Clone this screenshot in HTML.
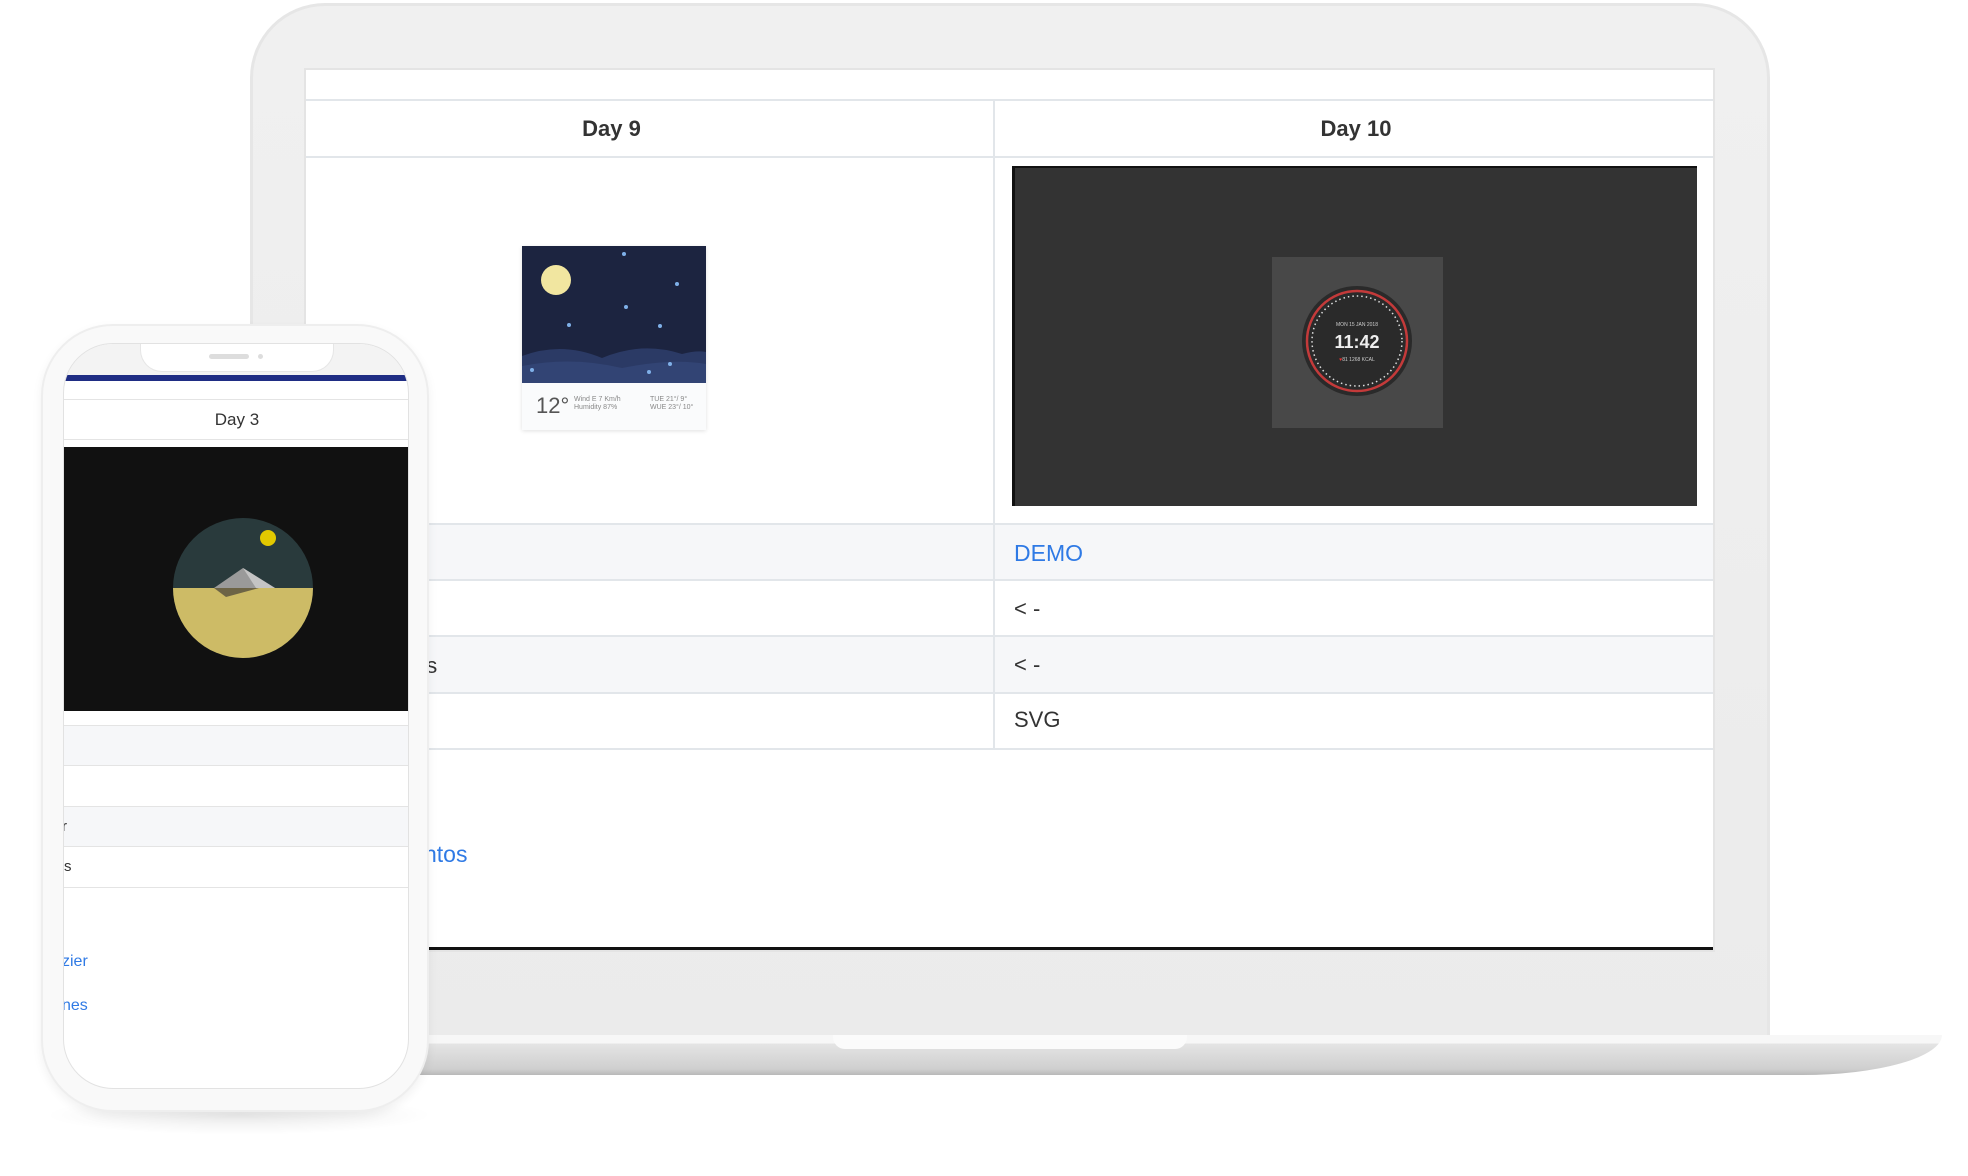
<!DOCTYPE html>
<html><head><meta charset="utf-8"><style>
*{margin:0;padding:0;box-sizing:border-box}
body{width:1968px;height:1176px;background:#fff;position:relative;overflow:hidden;font-family:"Liberation Sans",sans-serif;color:#333}
.a{position:absolute}
.lap{left:250px;top:3px;width:1520px;height:1042px;border-radius:75px 75px 0 0;background:linear-gradient(#f0f0f0,#ebebeb);border:3px solid #e6e6e6;border-bottom:none}
.scr{left:304px;top:68px;width:1411px;height:884px;background:#fff;border:2px solid #e4e4e4;overflow:hidden}
.line{height:2px;background:#e2e6ea}
.base{left:300px;top:1035px;width:1642px;height:40px;background:linear-gradient(#f7f7f7 0,#f7f7f7 8px,#e4e4e4 9px,#cfcfcf 34px,#b8b8b8 40px);border-radius:0 0 140px 0/0 0 40px 0}
</style></head><body>
<div class="a lap"></div>
<div class="a base"></div>
<div class="a" style="left:833px;top:1035px;width:354px;height:14px;background:#fbfbfb;border-radius:0 0 12px 12px"></div>
<div class="a scr">
 <div class="a" style="left:0;top:29px;width:1411px"><div class="line"></div></div>
 <div class="a" style="left:0;top:86px;width:1411px"><div class="line"></div></div>
 <div class="a" style="left:687px;top:30px;width:2px;height:650px;background:#e2e6ea"></div>
 <div class="a" style="left:-38px;top:46px;width:687px;text-align:center;font-size:22px;font-weight:bold;color:#333">Day 9</div>
 <div class="a" style="left:689px;top:46px;width:722px;text-align:center;font-size:22px;font-weight:bold;color:#333">Day 10</div>
 <div class="a" style="left:216px;top:176px;width:184px;height:184px;background:#fafbfc;box-shadow:0 1px 4px rgba(0,0,0,.12)">
  <svg width="184" height="137" style="display:block"><rect width="184" height="137" fill="#1c2440"/>
   <path d="M0 110 Q40 95 80 112 Q120 95 160 108 Q175 104 184 106 V137 H0Z" fill="#2b3a65"/>
   <path d="M0 120 Q50 110 100 122 Q150 112 184 118 V137 H0Z" fill="#324474"/>
   <circle cx="34" cy="34" r="15" fill="#f1e6a0"/>
   <g fill="#7fb0e8"><circle cx="102" cy="8" r="2"/><circle cx="155" cy="38" r="2"/><circle cx="104" cy="61" r="2"/><circle cx="47" cy="79" r="2"/><circle cx="138" cy="80" r="2"/><circle cx="148" cy="118" r="2"/><circle cx="10" cy="124" r="2"/><circle cx="127" cy="126" r="2"/></g></svg>
  <div class="a" style="left:14px;top:147px;font-size:22px;color:#555">12°</div>
  <div class="a" style="left:52px;top:150px;font-size:7px;color:#888;line-height:8px">Wind E 7 Km/h<br>Humidity 87%</div>
  <div class="a" style="left:128px;top:150px;font-size:7px;color:#888;line-height:8px">TUE 21°/ 9°<br>WUE 23°/ 10°</div>
 </div>
 <div class="a" style="left:706px;top:96px;width:685px;height:340px;background:#333;border-left:3px solid #111;border-top:2px solid #111"></div>
 <div class="a" style="left:966px;top:187px;width:171px;height:171px;background:#484848">
  <svg width="171" height="171"><circle cx="85" cy="84" r="55" fill="#2a2a2a"/><circle cx="85" cy="84" r="50" fill="none" stroke="#c43a3a" stroke-width="2.5"/><circle cx="85" cy="84" r="45" fill="none" stroke="#ddd" stroke-width="1.5" stroke-dasharray="1.5 3"/>
  <text x="85" y="69" font-size="5" fill="#ccc" text-anchor="middle" font-family="Liberation Sans">MON 15 JAN 2018</text>
  <text x="85" y="91" font-size="18" font-weight="bold" fill="#eee" text-anchor="middle" font-family="Liberation Sans">11:42</text>
  <text x="85" y="104" font-size="5" fill="#ccc" text-anchor="middle" font-family="Liberation Sans"><tspan fill="#e33">♥</tspan>81    1268 KCAL</text></svg>
 </div>
 <div class="a" style="left:0;top:453px;width:1411px;height:2px;background:#e2e6ea"></div>
 <div class="a" style="left:0;top:455px;width:1411px;height:56px;background:#f6f7f9;border-bottom:2px solid #e2e6ea"></div>
 <div class="a" style="left:0;top:511px;width:1411px;height:56px;border-bottom:2px solid #e2e6ea"></div>
 <div class="a" style="left:0;top:567px;width:1411px;height:57px;background:#f6f7f9;border-bottom:2px solid #e2e6ea"></div>
 <div class="a" style="left:0;top:624px;width:1411px;height:56px;border-bottom:2px solid #e2e6ea"></div>
 <div class="a" style="left:687px;top:455px;width:2px;height:225px;background:#e2e6ea"></div>
 <div class="a" style="left:708px;top:470px;font-size:23px;color:#2f7ae5">DEMO</div>
 <div class="a" style="left:708px;top:526px;font-size:22px;color:#333">&lt; -</div>
 <div class="a" style="left:708px;top:582px;font-size:22px;color:#333">&lt; -</div>
 <div class="a" style="left:708px;top:637px;font-size:22px;color:#333">SVG</div>
 <div class="a" style="left:108px;top:583px;font-size:22px;color:#333">ps</div>
 <div class="a" style="left:118px;top:771px;font-size:23px;color:#2f7ae5">ntos</div>
 <div class="a" style="left:0;top:877px;width:1411px;height:3px;background:#111"></div>
</div>
<div class="a" style="left:44px;top:1095px;width:390px;height:40px;background:radial-gradient(ellipse at center,rgba(0,0,0,.08),rgba(0,0,0,0) 70%)"></div>
<div class="a" style="left:41px;top:324px;width:388px;height:788px;border-radius:72px;background:#f9f9f9;border:2px solid #eee;box-shadow:0 4px 10px rgba(0,0,0,.06)"></div>
<div class="a" style="left:63px;top:343px;width:346px;height:746px;border-radius:50px;background:#fff;border:1px solid #e2e2e2;overflow:hidden">
 <div class="a" style="left:0;top:0;width:346px;height:31px;background:#f3f3f3"></div>
 <div class="a" style="left:76px;top:-2px;width:194px;height:30px;background:#fff;border-radius:0 0 22px 22px;border:1px solid #e6e6e6;border-top:none"></div>
 <div class="a" style="left:145px;top:10px;width:40px;height:5px;border-radius:3px;background:#ddd"></div>
 <div class="a" style="left:194px;top:10px;width:5px;height:5px;border-radius:3px;background:#ddd"></div>
 <div class="a" style="left:0;top:31px;width:346px;height:6px;background:#1f2d84"></div>
 <div class="a" style="left:0;top:55px;width:346px;height:1px;background:#e4e4e4"></div>
 <div class="a" style="left:0;top:66px;width:346px;text-align:center;font-size:17px;color:#333">Day 3</div>
 <div class="a" style="left:0;top:95px;width:346px;height:1px;background:#e4e4e4"></div>
 <div class="a" style="left:0;top:103px;width:346px;height:264px;background:#111">
  <svg width="346" height="264"><defs><clipPath id="c"><circle cx="179" cy="141" r="70"/></clipPath></defs>
   <g clip-path="url(#c)"><rect x="100" y="60" width="160" height="160" fill="#293a3c"/><rect x="100" y="141" width="160" height="90" fill="#cdbb66"/>
   <polygon points="150,141 179,121 211,141" fill="#9a9a9a"/><polygon points="179,121 211,141 192,141" fill="#c4c4c4"/><polygon points="150,141 195,141 162,150" fill="#6d6446"/></g>
   <circle cx="204" cy="91" r="8" fill="#e2c800"/></svg>
 </div>
 <div class="a" style="left:0;top:381px;width:346px;height:41px;background:#f6f7f9;border-top:1px solid #e4e4e4;border-bottom:1px solid #e4e4e4"></div>
 <div class="a" style="left:0;top:462px;width:346px;height:41px;background:#f6f7f9;border-top:1px solid #e4e4e4;border-bottom:1px solid #e4e4e4"></div>
 <div class="a" style="left:0;top:543px;width:346px;height:1px;background:#e4e4e4"></div>
 <div class="a" style="left:-2px;top:474px;font-size:15px;color:#333">r</div>
 <div class="a" style="left:0;top:514px;font-size:15px;color:#333">s</div>
 <div class="a" style="left:-2px;top:609px;font-size:16px;color:#2f7ae5">zier</div>
 <div class="a" style="left:-2px;top:653px;font-size:16px;color:#2f7ae5">nes</div>
</div>
</body></html>
